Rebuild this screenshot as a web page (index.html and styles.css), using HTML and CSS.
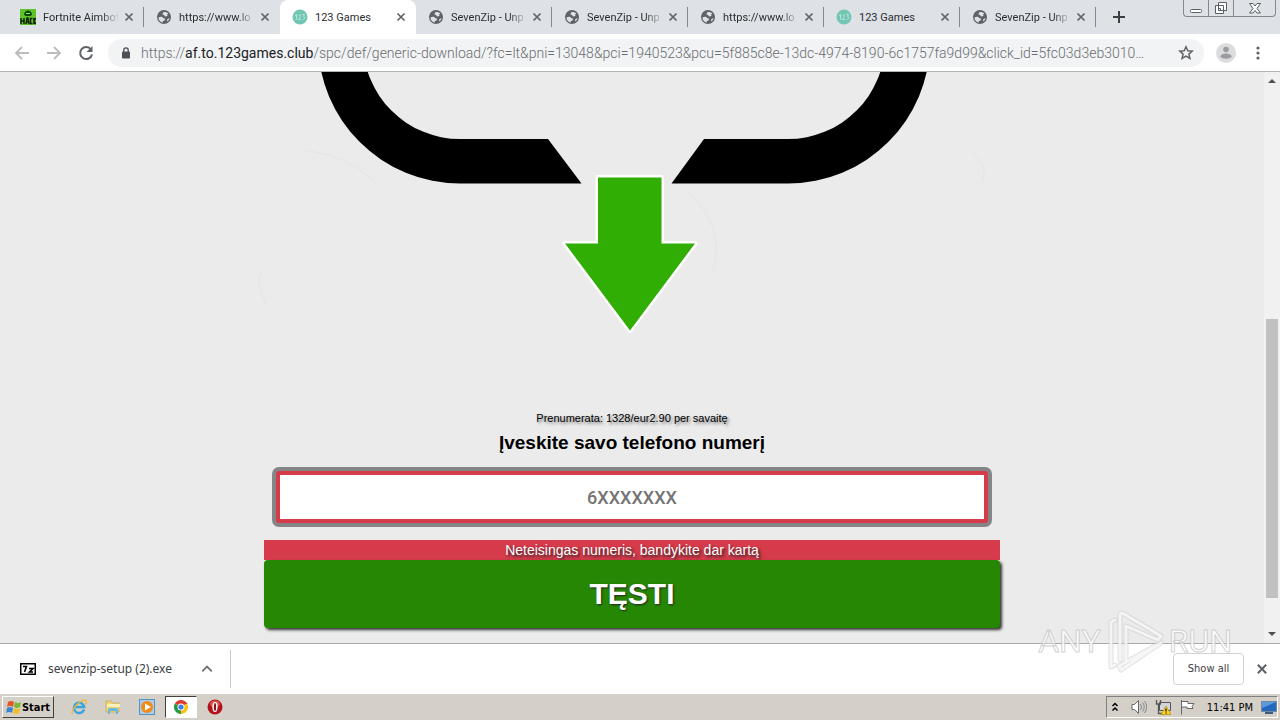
FILE: index.html
```
<!DOCTYPE html>
<html lang="lt">
<head>
    <meta charset="UTF-8" />
    <meta name="viewport" content="width=device-width, initial-scale=1" />
    <title>123 Games</title>
    <link rel="stylesheet" href="styles.css">
</head>

<body>
    <!-- shared icons -->
    <svg class="defs" aria-hidden="true">
        <symbol id="globe" viewBox="0 0 16 16">
            <circle cx="8" cy="8" r="7" fill="#5f6368" />
            <path d="M2.500 8.500c2-1 4-1 4.500.5l2 .5-.5 2-1.500.5-.5 1.500C4 13 2.500 11 2.500 8.500zM8.500 3c1.500 0 3 .5 4 1.800l-1.500.7.5 1.500-2.500.5-1-1.500-1.500-.5L7 3.500zM13.500 9c-.3 1.500-1 2.700-2.200 3.500L11 10.500z" fill="#dee1e6" />
        </symbol>
        <symbol id="games" viewBox="0 0 16 16">
            <circle cx="8" cy="8" r="7.500" fill="#72c7b4" />
            <path d="M3 6.500l1.500-1v5M6.500 6.500c1-1.500 2.500-.5 2 .8L6.500 10.500h2.300M10.500 5.500h2l-1 2c2 0 1.500 3-1 3" fill="none" stroke="#b9e4da" />
        </symbol>
        <symbol id="close" viewBox="0 0 10 10">
            <path d="M1.500 1.500l7 7M8.500 1.500l-7 7" fill="none" stroke="#5f6368" stroke-width="1.700" />
        </symbol>
    </svg>

    <header class="tabs">
        <div class="tab">
            <svg class="favicon" viewBox="0 0 16 16" aria-hidden="true">
                <rect width="16" height="16" fill="#5fc42a" />
                <path d="M4 6c0-6 8-6 8 0l-2 1H6z" fill="#07460e" />
                <path d="M6 4h4v1H6z" fill="#9ae868" />
                <path d="M1 9v6M4 9v6M1 12h3M6 15l1-6h1l1 6M6 13h3M12.500 9.500h-2v5h2M14 9v6M16 9l-2 3 2 3" fill="none" stroke="#10240a" stroke-width="1.500" />
            </svg>
            <span class="tab-title fade">Fortnite Aimbot</span>
            <button class="tab-close" aria-label="Close"><svg><use href="#close" /></svg></button>
        </div>
        <div class="tab no-line">
            <svg class="favicon"><use href="#globe" /></svg>
            <span class="tab-title fade">https://www.lo</span>
            <button class="tab-close" aria-label="Close"><svg><use href="#close" /></svg></button>
        </div>
        <div class="tab active">
            <svg class="favicon"><use href="#games" /></svg>
            <span class="tab-title">123 Games</span>
            <button class="tab-close" aria-label="Close"><svg><use href="#close" /></svg></button>
        </div>
        <div class="tab">
            <svg class="favicon"><use href="#globe" /></svg>
            <span class="tab-title fade">SevenZip - Unp</span>
            <button class="tab-close" aria-label="Close"><svg><use href="#close" /></svg></button>
        </div>
        <div class="tab">
            <svg class="favicon"><use href="#globe" /></svg>
            <span class="tab-title fade">SevenZip - Unp</span>
            <button class="tab-close" aria-label="Close"><svg><use href="#close" /></svg></button>
        </div>
        <div class="tab">
            <svg class="favicon"><use href="#globe" /></svg>
            <span class="tab-title fade">https://www.lo</span>
            <button class="tab-close" aria-label="Close"><svg><use href="#close" /></svg></button>
        </div>
        <div class="tab">
            <svg class="favicon"><use href="#games" /></svg>
            <span class="tab-title">123 Games</span>
            <button class="tab-close" aria-label="Close"><svg><use href="#close" /></svg></button>
        </div>
        <div class="tab">
            <svg class="favicon"><use href="#globe" /></svg>
            <span class="tab-title fade">SevenZip - Unp</span>
            <button class="tab-close" aria-label="Close"><svg><use href="#close" /></svg></button>
        </div>
        <button class="new-tab" aria-label="New tab">
            <svg viewBox="0 0 12 12"><path d="M6 0v12M0 6h12" stroke="#3c4043" stroke-width="2" /></svg>
        </button>
        <div class="window-buttons">
            <button aria-label="Minimize">
                <svg viewBox="0 0 14 14"><rect x="1.500" y="8.500" width="11" height="3" rx="1" fill="#fff" stroke="#5a5e66" /></svg>
            </button>
            <button aria-label="Restore">
                <svg viewBox="0 0 14 14"><path d="M4.500 1.500h8v8h-8zM1.500 4.500h8v8h-8z" fill="#fff" stroke="#5a5e66" /><path d="M4.500 7.500h2v2h-2z" fill="none" stroke="#5a5e66" /></svg>
            </button>
            <button class="wide" aria-label="Close window">
                <svg viewBox="0 0 14 14"><path d="M1.500 2.500h3.500l2 2.500 2-2.500h3.500L9 7.500l3.500 4.500H9L7 9.500 5 12H1.500L5 7.500z" fill="#fff" stroke="#5a5e66" /></svg>
            </button>
        </div>
    </header>

    <nav class="toolbar">
        <button class="nav-btn" aria-label="Back">
            <svg viewBox="0 0 16 16"><path d="M15 8H2M8 2L2 8l6 6" fill="none" stroke="#babcbe" stroke-width="1.800" /></svg>
        </button>
        <button class="nav-btn" aria-label="Forward">
            <svg viewBox="0 0 16 16"><path d="M1 8h13M8 2l6 6-6 6" fill="none" stroke="#babcbe" stroke-width="1.800" /></svg>
        </button>
        <button class="nav-btn" aria-label="Reload">
            <svg viewBox="0 0 16 16"><path d="M13 4.500A6 6 0 1 0 14 9.500" fill="none" stroke="#5f6368" stroke-width="2" /><path d="M14.500 1v6h-6z" fill="#5f6368" /></svg>
        </button>
        <div class="address">
            <svg class="lock" viewBox="0 0 10 12"><rect x="1" y="4.500" width="8" height="7" rx="1" fill="#4d5156" /><path d="M2.800 5V3a2.200 2.200 0 0 1 4.400 0v2" fill="none" stroke="#4d5156" stroke-width="1.300" /></svg>
            <span class="url">https://<b>af.to.123games.club</b>/spc/def/generic-download/?fc=lt&amp;pni=13048&amp;pci=1940523&amp;pcu=5f885c8e-13dc-4974-8190-6c1757fa9d99&amp;click_id=5fc03d3eb3010…</span>
            <button class="star" aria-label="Bookmark">
                <svg viewBox="0 0 16 16"><path d="M8 1.800l1.800 4 4.400.4-3.300 2.900 1 4.300L8 11.100l-3.900 2.300 1-4.300-3.300-2.900 4.400-.4z" fill="none" stroke="#5f6368" stroke-width="1.500" /></svg>
            </button>
        </div>
        <button class="profile" aria-label="Profile">
            <svg viewBox="0 0 20 20"><circle cx="10" cy="10" r="10" fill="#dcdcde" /><circle cx="10" cy="6.500" r="2.800" fill="#9a9da1" /><path d="M4.500 13.500c0-4 11-4 11 0-1 3-10 3-11 0z" fill="#9a9da1" /></svg>
        </button>
        <button class="menu" aria-label="Menu">
            <svg viewBox="0 0 4 14"><g fill="#5f6368"><circle cx="2" cy="2" r="1.600" /><circle cx="2" cy="7" r="1.600" /><circle cx="2" cy="12" r="1.600" /></g></svg>
        </button>
    </nav>

    <div class="viewport">
        <main class="page">
            <svg class="download-art" viewBox="264 72 736 338" aria-hidden="true">
                <path d="M318 42A142 142 0 0 0 460 183.500H581.500L548 139H460A97 97 0 0 1 363 42z" />
                <path d="M930 42A142 142 0 0 1 788 183.500H671.500L704 139H788A97 97 0 0 0 885 42z" />
                <path d="M598 177.500H661.500V243.500H695L630 330.500 565 243.500H598z" fill="#fff" stroke="#fff" stroke-width="5" stroke-linejoin="round" />
                <path d="M598 177.500H661.500V243.500H695L630 330.500 565 243.500H598z" fill="#30ae03" />
                <g fill="none" stroke="#e5e5e5">
                    <path d="M305 150q40 5 68 30M685 190q30 25 32 60M716 250q1 10-3 20M970 150q20 15 12 32M262 270q-8 15 5 35" />
                </g>
            </svg>
            <form class="subscribe">
                <p class="price">Prenumerata: 1328/eur2.90 per savaitę</p>
                <label for="phone">Įveskite savo telefono numerį</label>
                <input type="tel" id="phone" placeholder="6XXXXXXX" />
                <p class="error" role="alert">Neteisingas numeris, bandykite dar kartą</p>
                <button type="button" class="submit">TĘSTI</button>
            </form>
        </main>
        <div class="scrollbar" aria-hidden="true">
            <svg viewBox="0 0 16 16"><path d="M4 10l4-4 4 4z" fill="#505050" /></svg>
            <div class="track"><div class="thumb"></div></div>
            <svg viewBox="0 0 16 16"><path d="M4 6l4 4 4-4z" fill="#505050" /></svg>
        </div>
    </div>

    <section class="downloads" aria-label="Downloads">
        <div class="download">
            <svg class="file-icon" viewBox="0 0 16 12"><rect width="16" height="12" fill="#000" /><rect x="1.500" y="1.500" width="13" height="9" fill="#fff" /><path d="M3 3.500h3.500L4.500 9M9 5.500h4L9.500 9H13" fill="none" stroke="#000" stroke-width="1.600" /></svg>
            <span class="file-name">sevenzip-setup (2).exe</span>
            <button aria-label="More">
                <svg viewBox="0 0 10 10"><path d="M1 7l4-4 4 4" fill="none" stroke="#6e7176" stroke-width="1.500" /></svg>
            </button>
        </div>
        <button class="show-all">Show all</button>
        <button class="close-bar" aria-label="Close downloads"><svg><use href="#close" /></svg></button>
    </section>

    <footer class="taskbar">
        <button class="start">
            <svg viewBox="0 0 16 16"><path d="M2 3q3-2 6 0L7 8Q4 6 1 8z" fill="#e2562a" /><path d="M9 3q3 2 6 0l-1 5q-3 2-6 0z" fill="#79b833" /><path d="M1 9q3-2 6 0l-1 5q-3-2-6 0z" fill="#3a86d1" /><path d="M8 9q3 2 6 0l-1 5q-3 2-6 0z" fill="#f5bd28" /></svg>
            Start
        </button>
        <button class="task" aria-label="Internet Explorer">
            <svg viewBox="0 0 16 16"><path d="M13 10.500A5.200 5.200 0 1 1 13.200 8H4" fill="none" stroke="#36a3e2" stroke-width="2.400" /><path d="M1.500 15C-1 11 11-1 15 1.500c1 1 0 3-1 4" fill="none" stroke="#efb92d" stroke-width="1.300" /></svg>
        </button>
        <button class="task" aria-label="Explorer">
            <svg viewBox="0 0 16 16"><path d="M1 2h5l1 2h7v9H1z" fill="#eed57b" stroke="#c5a750" stroke-width=".7" /><path d="M2 5h13v3H2z" fill="#fbf0b8" /><path d="M3 15v-4q0-2 2-2h6q2 0 2 2v4h-2v-3H5v3z" fill="#68b7e1" /></svg>
        </button>
        <button class="task" aria-label="Media Player">
            <svg viewBox="0 0 16 16"><rect x=".5" y=".5" width="15" height="15" fill="#a9cdeb" stroke="#5792c4" /><circle cx="8" cy="8" r="6" fill="#f28a16" /><path d="M6 4.500v7L12 8z" fill="#fff" /></svg>
        </button>
        <button class="task running" aria-label="Chrome">
            <svg viewBox="0 0 16 16"><path d="M8 8L1.900 4.500A7 7 0 0 1 14.100 4.500z" fill="#e2382b" /><path d="M8 8h0L14.100 4.500A7 7 0 0 1 8 15z" fill="#fbc116" /><path d="M8 8v7A7 7 0 0 1 1.900 4.500z" fill="#279847" /><path d="M8 4.500h6.100" stroke="#e2382b" /><circle cx="8" cy="8" r="3.500" fill="#fff" /><circle cx="8" cy="8" r="2.600" fill="#3e7fe8" /></svg>
        </button>
        <button class="task" aria-label="Opera">
            <svg viewBox="0 0 16 16"><circle cx="8" cy="8" r="7.500" fill="#b3131b" /><ellipse cx="8" cy="5" rx="5" ry="3.500" fill="#db5650" /><ellipse cx="8" cy="8" rx="2.600" ry="5" fill="#fff" /><ellipse cx="8" cy="8" rx="1.100" ry="4" fill="#8c1016" /></svg>
        </button>
        <div class="tray">
            <svg viewBox="0 0 16 16"><path d="M5.500 7L8 4.500 10.500 7M5.500 11.500L8 9l2.500 2.500" fill="none" stroke="#000" stroke-width="1.500" /></svg>
            <svg viewBox="0 0 16 16"><path d="M1 5.500h2.500l4-4v13l-4-4H1z" fill="#fff" stroke="#66686b" /><path d="M9.500 5q2 3 0 6M11.500 3.500q3.500 4.500 0 9M13.500 2q4.500 6 0 12" fill="none" stroke="#85878a" /></svg>
            <svg viewBox="0 0 16 16"><path d="M4.500 3.500h11v8h-11z" fill="#d3d7db" stroke="#555" /><path d="M1.500 1v4h4V1M3.500 5v9.500h6" fill="none" stroke="#555" stroke-width="1.300" /><path d="M11 7l5 8.500H6z" fill="#ffd51c" stroke="#a88503" stroke-width=".6" /><path d="M11 9.500v3M11 13.500v1" stroke="#000" stroke-width="1.200" /></svg>
            <svg viewBox="0 0 16 16"><path d="M2.500 1v14.500M3 2.500h6v2h6l-2 3 1 2H8V8H3" fill="#fff" stroke="#66686b" /></svg>
            <time class="clock">11:41 PM</time>
            <svg viewBox="0 0 16 16"><rect x=".5" y="2.500" width="15" height="10" fill="#2368bd" stroke="#76889e" /><path d="M1 3h14L1 9z" fill="#5a9be0" /><path d="M4 14h8" stroke="#3d5c80" stroke-width="2" /></svg>
        </div>
    </footer>

    <div class="watermark" aria-hidden="true">
        <span>ANY</span>
        <svg viewBox="6 2 60 70">
            <defs>
                <path id="play" d="M16 16l-4 2v45l4-2M21 56V11q0-3 4-1l37 22-3 4-32-14v34M62 39L22 66l-2-4 38-21" />
            </defs>
            <use href="#play" class="play-edge" />
            <use href="#play" class="play-line" />
        </svg>
        <span>RUN</span>
    </div>
</body>

</html>
```
FILE: styles.css
```
* {
    box-sizing: border-box;
}

html,
body {
    margin: 0;
    height: 100%;
}

body {
    display: flex;
    flex-direction: column;
    overflow: hidden;
    position: relative;
    font-family: "DejaVu Sans Condensed", "Noto Sans", sans-serif;
    font-size: 12px;
    color: #3c4043;
    background: #fff;
}

button {
    display: flex;
    align-items: center;
    justify-content: center;
    flex: none;
    padding: 0;
    border: none;
    background: none;
    color: inherit;
    font: inherit;
}

p {
    margin: 0;
}

svg {
    flex: none;
}

.defs {
    display: none;
}

/* tab strip */
.tabs {
    display: flex;
    flex: none;
    height: 34px;
    padding-left: 8px;
    background: #dee1e6;
}

.tab {
    display: flex;
    align-items: center;
    flex: 0 1 136px;
    min-width: 0;
    padding: 0 10px 0 12px;
    background: linear-gradient(#85888d, #85888d) right center / 1px 20px no-repeat;
}

.tab.no-line {
    background: none;
}

.tab.active {
    background: #fff;
    border-radius: 8px 8px 0 0;
}

.favicon {
    width: 16px;
    height: 16px;
    margin-right: 7px;
}

.tab-title {
    flex: 1;
    min-width: 0;
    white-space: nowrap;
    font-family: "Roboto", sans-serif;
    font-size: 11px;
    color: #2b2e31;
}

.tab-title.fade {
    -webkit-mask-image: linear-gradient(90deg, #000 58px, transparent 76px);
    mask-image: linear-gradient(90deg, #000 58px, transparent 76px);
}

.tab-close svg,
.close-bar svg {
    width: 10px;
    height: 10px;
}

.new-tab {
    width: 46px;
}

.new-tab svg {
    width: 12px;
    height: 12px;
}

.window-buttons {
    display: flex;
    height: 17px;
    margin: 0 4px 0 auto;
    border: 1px solid #85898f;
    border-top: none;
    border-radius: 0 0 4px 4px;
}

.window-buttons button {
    width: 25px;
    border-right: 1px solid #85898f;
}

.window-buttons .wide {
    width: 41px;
    border-right: none;
}

.window-buttons svg {
    width: 14px;
    height: 14px;
}

/* toolbar */
.toolbar {
    display: flex;
    align-items: center;
    flex: none;
    height: 38px;
    padding: 0 12px 0 6px;
    border-bottom: 1px solid #b0b4b3;
}

.nav-btn {
    width: 32px;
}

.nav-btn svg {
    width: 16px;
    height: 16px;
}

.address {
    display: flex;
    align-items: center;
    flex: 1;
    min-width: 0;
    height: 28px;
    margin-left: 6px;
    padding: 0 10px 0 13px;
    border-radius: 14px;
    background: #f1f3f4;
}

.lock {
    width: 10px;
    height: 12px;
    margin-right: 10px;
}

.url {
    flex: 1;
    min-width: 0;
    overflow: hidden;
    white-space: nowrap;
    font-family: "Roboto", sans-serif;
    font-size: 14px;
    font-weight: 300;
    color: #6a6e72;
}

.url b {
    font-weight: 400;
    color: #202124;
}

.star svg {
    display: block;
    width: 16px;
    height: 16px;
}

.profile {
    margin-left: 12px;
}

.profile svg {
    width: 20px;
    height: 20px;
}

.menu {
    width: 20px;
    margin-left: 12px;
}

.menu svg {
    width: 4px;
    height: 14px;
}

/* page */
.viewport {
    display: flex;
    flex: 1;
    min-height: 0;
    background: #ebebeb;
}

.page {
    flex: 1;
    overflow: hidden;
    font-family: "Liberation Sans", Arial, sans-serif;
    text-align: center;
}

.download-art {
    display: block;
    width: 736px;
    max-width: 100%;
    margin: 0 auto;
    overflow: visible;
}

.subscribe {
    display: flex;
    flex-direction: column;
    max-width: 736px;
    margin: 0 auto;
}

.price {
    font-size: 11px;
    line-height: 16px;
    color: #000;
    text-shadow: 2px 2px 3px #777;
}

.subscribe label {
    margin: 4px 0 15px;
    font-size: 19px;
    line-height: 26px;
    font-weight: bold;
    color: #000;
}

.subscribe input {
    height: 52px;
    margin: 0 12px;
    border: 4px solid #d63b4b;
    border-radius: 3px;
    outline: none;
    background: #fff;
    box-shadow: 0 0 0 4px #858585;
    font-family: "Roboto", sans-serif;
    font-size: 18px;
    font-weight: 500;
    text-align: center;
}

.subscribe input::placeholder {
    color: #757575;
}

.error {
    margin-top: 17px;
    background: #d63b4b;
    color: #fff;
    font-size: 14px;
    line-height: 20px;
    text-shadow: 2px 2px 3px #222;
}

.submit {
    height: 68px;
    border-radius: 4px;
    background: #268704;
    box-shadow: 2px 2px 3px #333;
    color: #fff;
    font-size: 30px;
    font-weight: bold;
    text-shadow: 1px 1px 2px #222;
}

.scrollbar {
    display: flex;
    flex-direction: column;
    width: 16px;
    background: #f1f1f1;
}

.scrollbar svg {
    width: 16px;
    height: 18px;
}

.track {
    display: flex;
    flex: 1;
    flex-direction: column;
    justify-content: flex-end;
    padding: 0 2px 27px;
}

.thumb {
    height: 55%;
    background: #c1c1c1;
}

/* downloads bar */
.downloads {
    display: flex;
    align-items: center;
    flex: none;
    height: 50px;
    padding-right: 12px;
    border-top: 1px solid #a9aaab;
}

.download {
    display: flex;
    align-items: center;
    width: 231px;
    height: 38px;
    padding: 0 17px 0 20px;
    border-right: 1px solid #c8cacc;
}

.file-icon {
    width: 16px;
    height: 12px;
    margin-right: 12px;
}

.file-name {
    flex: 1;
    white-space: nowrap;
    font-family: "Noto Sans", sans-serif;
    font-size: 12px;
}

.download button svg {
    width: 12px;
    height: 12px;
}

.show-all {
    width: 71px;
    height: 32px;
    margin-left: auto;
    border: 1px solid #d0d3d6;
    border-radius: 4px;
    font-size: 11px;
}

.close-bar {
    margin-left: 12px;
}

.close-bar svg {
    width: 12px;
    height: 12px;
}

/* taskbar */
.taskbar {
    display: flex;
    align-items: center;
    flex: none;
    height: 27px;
    padding: 0 2px;
    border-top: 1px solid #fff;
    background: #d4d0c8;
    color: #000;
    font-size: 11px;
}

.start {
    width: 52px;
    height: 22px;
    margin-right: 8px;
    border: 1px solid;
    border-color: #fff #404040 #404040 #fff;
    font-weight: bold;
}

.start svg,
.task svg,
.tray svg {
    width: 16px;
    height: 16px;
}

.task {
    width: 34px;
    height: 22px;
}

.task.running {
    width: 32px;
    margin: 0 1px;
    border: 1px solid;
    border-color: #404040 #fff #fff #404040;
    background: #fff;
}

.tray {
    display: flex;
    align-items: center;
    gap: 8px;
    height: 22px;
    margin-left: auto;
    border: 1px solid;
    border-color: #808080 #fff #fff #808080;
}

.clock {
    margin-left: 4px;
    white-space: nowrap;
}

/* stamp over the bottom right corner */
.watermark {
    position: absolute;
    right: 48px;
    bottom: 44px;
    display: flex;
    align-items: center;
    gap: 4px;
    color: rgba(255, 255, 255, .8);
    font-family: "Roboto", sans-serif;
    font-size: 32px;
    -webkit-text-stroke: 1px rgba(190, 190, 190, .7);
    pointer-events: none;
}

.watermark svg {
    width: 60px;
    height: 70px;
    fill: none;
    stroke-linejoin: round;
    stroke-linecap: round;
}

.play-edge {
    stroke: rgba(205, 205, 205, .6);
    stroke-width: 5px;
}

.play-line {
    stroke: rgba(255, 255, 255, .7);
    stroke-width: 3px;
}
```
